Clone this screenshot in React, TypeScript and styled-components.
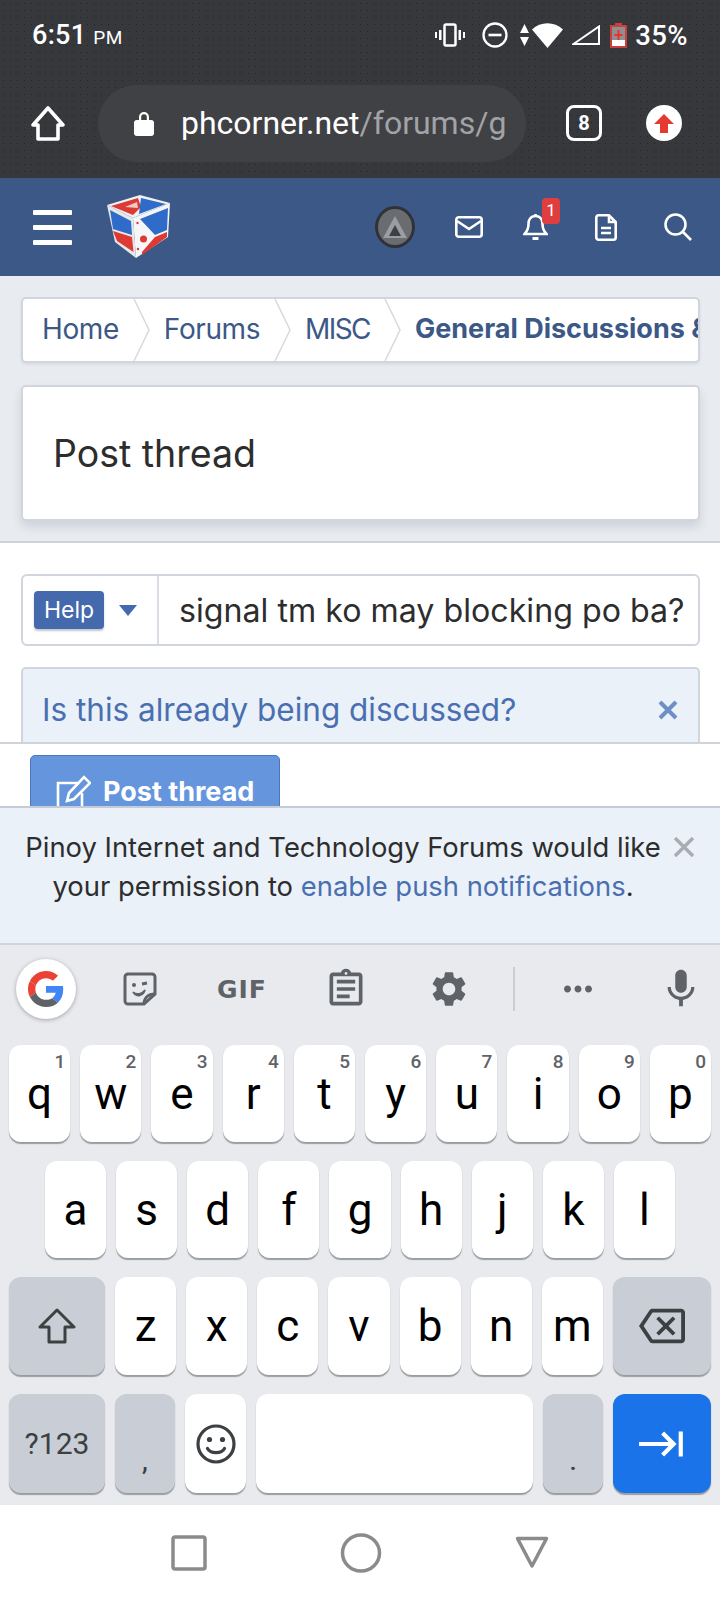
import React from 'react'
import styled, { createGlobalStyle } from 'styled-components'
import {
  MdKeyboardTab,
  MdMic,
  MdMoreHoriz,
  MdOutlineAssignment,
  MdOutlineBackspace,
  MdSettings,
} from 'react-icons/md'

const GlobalStyle = createGlobalStyle`
  html, body { margin: 0; padding: 0; background: #fff; }
  * { box-sizing: border-box; }
  body { font-family: Roboto, "Liberation Sans", sans-serif; }
`

const Screen = styled.div`
  width: 720px;
  height: 1600px;
  display: flex;
  flex-direction: column;
  overflow: hidden;
`

const Chrome = styled.div`
  height: 178px;
  background-color: #37383c;
  background-image: radial-gradient(rgba(0, 0, 0, 0.35) 0.7px, transparent 0.9px);
  background-size: 7px 7px;
  color: #fff;
`
const StatusBar = styled.div`
  height: 68px;
  display: flex;
  align-items: center;
  padding: 2px 32px 0;
`
const Clock = styled.div`
  font-size: 27px;
  font-weight: 500;
  letter-spacing: 0.3px;
  small { font-size: 19px; margin-left: 7px; font-weight: 400; }
`
const StatusIcons = styled.div`
  margin-left: auto;
  display: flex;
  align-items: center;
`
const StatusIcon = styled.svg<{ $gap?: number }>`
  display: block;
  margin-left: ${(p) => p.$gap ?? 0}px;
  fill: #fff;
`
const Battery = styled.div`
  font-size: 27.5px;
  font-weight: 500;
  margin-left: 8px;
  letter-spacing: 0.4px;
`
const UrlRow = styled.div`
  height: 110px;
  display: flex;
  align-items: center;
  padding-left: 30px;
`
const UrlPill = styled.div`
  width: 428px;
  height: 77px;
  margin-left: 32px;
  border-radius: 39px;
  background: #404145;
  display: flex;
  align-items: center;
  padding-left: 36px;
  gap: 27px;
  overflow: hidden;
`
const UrlText = styled.div`
  font-size: 32px;
  white-space: nowrap;
  span { color: #a2a3a6; }
`
const TabCount = styled.div`
  width: 36px;
  height: 36px;
  margin-left: 40px;
  border: 3.5px solid #fff;
  border-radius: 8px;
  display: flex;
  align-items: center;
  justify-content: center;
  font-size: 20px;
  font-weight: 700;
`
const UploadBadge = styled.div`
  width: 36px;
  height: 36px;
  margin-left: 44px;
  border-radius: 50%;
  background: #fff;
  display: flex;
  align-items: center;
  justify-content: center;
`

const SiteHeader = styled.div`
  height: 98px;
  background: #3b5886;
  display: flex;
  align-items: center;
  padding: 0 28px 0 33px;
`
const Burger = styled.div`
  width: 39px;
  display: flex;
  flex-direction: column;
  gap: 10px;
  i { display: block; height: 5px; background: #fff; border-radius: 1px; }
`
const Logo = styled.svg`
  margin-left: 33px;
  display: block;
`
const HeaderTools = styled.div`
  margin-left: auto;
  display: flex;
  align-items: center;
  gap: 40px;
`
const Avatar = styled.div`
  width: 40px;
  height: 42px;
  border-radius: 50%;
  background: #6a6c70;
  border: 3px solid #2f3237;
  display: flex;
  align-items: center;
  justify-content: center;
`
const ToolIcon = styled.svg<{ $after?: number }>`
  display: block;
  fill: none;
  stroke: #fff;
  stroke-width: 2.6;
  margin-right: ${(p) => p.$after ?? 0}px;
`
const BellWrap = styled.div`
  position: relative;
  margin-right: 7px;
`
const Badge = styled.div`
  position: absolute;
  top: -15px;
  right: -12px;
  width: 18px;
  height: 26px;
  border-radius: 4px;
  background: #e03e3e;
  color: #fff;
  font-size: 17px;
  text-align: center;
  line-height: 24px;
`

const TopArea = styled.div`
  height: 267px;
  background: #e8ebef;
  border-bottom: 2px solid #cfd3da;
  padding: 21px 20px 0 21px;
`
const Breadcrumbs = styled.div`
  height: 66px;
  background: #fff;
  border: 2px solid #d0d5de;
  border-radius: 5px;
  display: flex;
  align-items: stretch;
  gap: 14px;
  padding-left: 19px;
  overflow: hidden;
  box-shadow: 0 2px 3px rgba(60, 70, 90, 0.08);
`
const Crumb = styled.a<{ $tight?: boolean }>`
  font-family: Inter, "Noto Sans", sans-serif;
  font-size: 28px;
  line-height: 60px;
  color: #3b5886;
  white-space: nowrap;
  letter-spacing: ${(p) => (p.$tight ? '-1.6px' : '-0.4px')};
`
const CurrentCrumb = styled(Crumb)`
  font-size: 27px;
  font-weight: 700;
  letter-spacing: 0;
`
const CrumbArrow = styled.svg`
  flex: none;
  display: block;
`
const TitleCard = styled.div`
  height: 136px;
  margin-top: 22px;
  background: #fff;
  border: 2px solid #d0d5de;
  border-radius: 5px;
  display: flex;
  align-items: center;
  padding-left: 30px;
  box-shadow: 0 6px 10px rgba(60, 70, 90, 0.14);
`
const PageTitle = styled.h1`
  margin: 0;
  font-family: Inter, "Noto Sans", sans-serif;
  font-size: 37.5px;
  font-weight: 400;
  color: #2d2d2d;
`

const FormArea = styled.div`
  height: 201px;
  background: #fff;
  padding: 31px 20px 0 21px;
  border-bottom: 2px solid #cfd3da;
  overflow: hidden;
`
const TitleInput = styled.div`
  height: 72px;
  border: 2px solid #d0d5de;
  border-radius: 6px;
  display: flex;
  align-items: center;
`
const PrefixCell = styled.div`
  width: 136px;
  height: 100%;
  flex: none;
  border-right: 2px solid #d9dde4;
  display: flex;
  align-items: center;
  padding-left: 11px;
  gap: 15px;
`
const PrefixLabel = styled.span`
  width: 70px;
  height: 38px;
  background: #4469ad;
  border-radius: 4px;
  color: #fff;
  font-family: Inter, "Noto Sans", sans-serif;
  font-size: 23px;
  line-height: 38px;
  text-align: center;
  box-shadow: 0 2px 2px rgba(60, 70, 90, 0.3);
`
const Caret = styled.i`
  width: 0;
  height: 0;
  border-left: 9px solid transparent;
  border-right: 9px solid transparent;
  border-top: 11px solid #4469ad;
`
const InputText = styled.div`
  padding-left: 20px;
  font-family: Inter, "Noto Sans", sans-serif;
  font-size: 32.2px;
  color: #2d2d2d;
  white-space: nowrap;
`
const Notice = styled.div`
  height: 90px;
  margin-top: 21px;
  background: #eaf1f9;
  border: 2px solid #d0d5de;
  border-bottom: 0;
  border-radius: 5px 5px 0 0;
  display: flex;
  align-items: flex-start;
  justify-content: space-between;
  padding: 22px 20px 0 19px;
`
const NoticeText = styled.div`
  font-family: Inter, "Noto Sans", sans-serif;
  font-size: 31.5px;
  line-height: 38px;
  color: #4a6fb0;
`
const NoticeClose = styled.svg`
  margin-top: 9px;
`

const ActionBar = styled.div`
  height: 62px;
  background: #fff;
  padding: 11px 0 0 30px;
  overflow: hidden;
`
const SubmitButton = styled.button`
  width: 250px;
  height: 80px;
  background: #6495dd;
  border: 1px solid #4a78c0;
  border-radius: 5px;
  display: flex;
  align-items: flex-start;
  gap: 12px;
  padding: 22px 0 0 25px;
  color: #fff;
  font-family: Inter, "Noto Sans", sans-serif;
  font-size: 27px;
  line-height: 28px;
  font-weight: 700;
  white-space: nowrap;
  svg { margin-top: -3px; }
`

const PushBar = styled.div`
  height: 139px;
  background: #eaf1f9;
  border-top: 2px solid #c5ccd8;
  border-bottom: 2px solid #cfd5de;
  position: relative;
  padding-top: 20px;
  font-family: Inter, "Noto Sans", sans-serif;
  font-size: 27.4px;
  line-height: 39px;
  color: #2d2d2d;
  text-align: center;
  a { color: #4a6fb0; }
`
const PushLines = styled.div`
  width: 686px;
  white-space: nowrap;
`
const PushClose = styled.svg`
  position: absolute;
  right: 26px;
  top: 29px;
`

const Keyboard = styled.div`
  height: 560px;
  background: #e8eaed;
  display: flex;
  flex-direction: column;
`
const Strip = styled.div`
  height: 100px;
  position: relative;
  display: flex;
  align-items: center;
  color: #5f6368;
`
const GoogleButton = styled.div`
  position: absolute;
  left: 16px;
  top: 14px;
  width: 60px;
  height: 60px;
  border-radius: 50%;
  background: #fff;
  box-shadow: 0 1px 4px rgba(0, 0, 0, 0.3);
  display: flex;
  align-items: center;
  justify-content: center;
`
const StripTools = styled.div`
  width: 100%;
  display: grid;
  grid-template-columns: 92px 112px 96px 110px 20px 108px 98px;
  padding-left: 94px;
  align-items: center;
  justify-items: center;
  margin-top: -12px;
`
const GifLabel = styled.span`
  font-family: "DejaVu Sans", sans-serif;
  font-size: 25px;
  font-weight: 700;
  letter-spacing: 1px;
  color: #5f6368;
`
const StripDivider = styled.i`
  width: 2px;
  height: 44px;
  background: #ccced2;
`
const KeyRows = styled.div`
  display: flex;
  flex-direction: column;
  gap: 19px;
`
const KeyRow = styled.div<{ $inset?: number; $h?: number }>`
  height: ${(p) => p.$h ?? 97}px;
  display: flex;
  gap: 10px;
  padding: 0 ${(p) => p.$inset ?? 9}px;
`
const Key = styled.div<{ $w?: number; $tone?: 'light' | 'mod' | 'action' }>`
  position: relative;
  flex: ${(p) => (p.$w ? `0 0 ${p.$w}px` : '1 1 0')};
  min-width: 0;
  border-radius: 12px;
  display: flex;
  align-items: center;
  justify-content: center;
  font-size: 44px;
  color: #000;
  background: ${(p) =>
    p.$tone === 'mod' ? '#c9ced6' : p.$tone === 'action' ? '#1a73e8' : '#fff'};
  box-shadow: 0 1.5px 1px rgba(60, 64, 67, 0.45);
`
const Hint = styled.span`
  position: absolute;
  top: 5px;
  right: 5px;
  font-size: 19px;
  font-weight: 500;
  color: #5f6368;
`
const SymbolLabel = styled.span`
  font-size: 30px;
  color: #3c4043;
`
const Punct = styled.span`
  font-size: 26px;
  font-weight: 500;
  color: #3c4043;
  align-self: flex-end;
  padding-bottom: 19px;
  line-height: 1;
`

const NavBar = styled.div`
  flex: 1;
  background: #fff;
  display: flex;
  align-items: center;
  justify-content: center;
  gap: 133px;
`

const rowOne = ['q', 'w', 'e', 'r', 't', 'y', 'u', 'i', 'o', 'p']
const hints = ['1', '2', '3', '4', '5', '6', '7', '8', '9', '0']
const rowTwo = ['a', 's', 'd', 'f', 'g', 'h', 'j', 'k', 'l']
const rowThree = ['z', 'x', 'c', 'v', 'b', 'n', 'm']

const CubeLogo = () => (
  <Logo width="68" height="68" viewBox="0 0 68 68">
    <path d="M2 12 35 2 65 10 28 25Z" fill="#eef0f2" />
    <path d="M6 13 33 5 36 14 28 22Z" fill="#dc3a33" />
    <path d="M36 5 61 11 34 21Z" fill="#2f6bc9" />
    <path d="M20 14 32 9 33 15Z" fill="#f1c9c4" />
    <path d="M2 12 28 25 31 65 10 49Z" fill="#e6e8ea" />
    <path d="M5 17 26 28 27 42 8 36Z" fill="#2f6bc9" />
    <path d="M8 38 27 44 28.500 59 12 48Z" fill="#dc3a33" />
    <path d="M28 25 65 10 63 44 31 65Z" fill="#f5f6f7" />
    <path d="M35 26 63 15 62 37 50 42Z" fill="#2f6bc9" />
    <path d="M50 44 62 39 62 44 37 62 37 59Z" fill="#dc3a33" />
    <circle cx="38.500" cy="46" r="3.500" fill="#dc3a33" />
    <circle cx="32.500" cy="30" r="1.200" fill="#dc3a33" />
    <circle cx="33" cy="56" r="1.200" fill="#dc3a33" />
  </Logo>
)

const GoogleMark = () => (
  <svg width="36" height="36" viewBox="0 0 48 48">
    <path fill="#EA4335" d="M24 9.5c3.54 0 6.71 1.22 9.21 3.6l6.85-6.85C35.9 2.38 30.47 0 24 0 14.62 0 6.51 5.38 2.56 13.22l7.98 6.19C12.43 13.72 17.74 9.5 24 9.5z" />
    <path fill="#4285F4" d="M46.98 24.55c0-1.57-.15-3.09-.38-4.55H24v9.02h12.94c-.58 2.96-2.26 5.48-4.78 7.18l7.73 6c4.51-4.18 7.09-10.36 7.09-17.65z" />
    <path fill="#EA4335" d="M10.53 28.59c-.48-1.45-.76-2.99-.76-4.59s.27-3.14.76-4.59l-7.98-6.19C.92 16.46 0 20.12 0 24c0 3.88.92 7.54 2.56 10.78l7.97-6.19z" />
    <path fill="#5f6368" d="M24 48c6.48 0 11.93-2.13 15.89-5.81l-7.73-6c-2.15 1.45-4.92 2.3-8.16 2.3-6.26 0-11.57-4.22-13.47-9.91l-7.98 6.19C6.51 42.62 14.62 48 24 48z" />
  </svg>
)

const CrumbDivider = () => (
  <CrumbArrow width="17" height="62" viewBox="0 0 17 62" fill="none" stroke="#d6d9de" strokeWidth="1.5">
    <path d="M1 0 16 31 1 62" />
  </CrumbArrow>
)

export default function App() {
  return (
    <Screen>
      <GlobalStyle />
      <Chrome>
        <StatusBar>
          <Clock>
            6:51<small>PM</small>
          </Clock>
          <StatusIcons>
            <StatusIcon width="30" height="26" viewBox="0 0 30 26">
              <rect x="9.5" y="2.5" width="11" height="21" rx="1.5" fill="none" stroke="#fff" strokeWidth="2.5" />
              <rect x="4" y="8" width="2.5" height="10" />
              <rect x="23.5" y="8" width="2.5" height="10" />
              <rect x="0" y="10" width="2" height="6" />
              <rect x="28" y="10" width="2" height="6" />
            </StatusIcon>
            <StatusIcon $gap={17} width="26" height="26" viewBox="0 0 26 26">
              <circle cx="13" cy="13" r="11.5" fill="none" stroke="#fff" strokeWidth="2.3" />
              <rect x="6.5" y="11.7" width="13" height="2.6" />
            </StatusIcon>
            <StatusIcon $gap={12} width="9" height="22" viewBox="0 0 9 22">
              <path d="M4.5 0 9 9H0ZM0 13h9l-4.5 9Z" />
            </StatusIcon>
            <StatusIcon $gap={3} width="31" height="25" viewBox="0 0 31 25">
              <path d="M15.5 25 0 6.5C8.5-2 22.5-2 31 6.5Z" />
            </StatusIcon>
            <StatusIcon $gap={9} width="28" height="20" viewBox="0 0 28 20">
              <path d="M1.5 19 27 1.5V19Z" fill="none" stroke="#fff" strokeWidth="2" />
            </StatusIcon>
            <StatusIcon $gap={10} width="17" height="25" viewBox="0 0 17 25">
              <path d="M5 0h7v2h5v23H0V2h5Z" fill="#c9403a" />
              <rect x="2" y="4" width="13" height="13" fill="#8f8f92" />
              <rect x="2" y="17" width="13" height="6" fill="#fff" />
              <path d="M7.5 7h2v4h3v2h-3v4h-2v-4h-3v-2h3Z" fill="#e8332c" />
            </StatusIcon>
            <Battery>35%</Battery>
          </StatusIcons>
        </StatusBar>
        <UrlRow>
          <svg width="36" height="37" viewBox="0 0 36 37" fill="none" stroke="#fff" strokeWidth="3.6" strokeLinejoin="round">
            <path d="M18 3 33 20H28V34H8V20H3Z" />
          </svg>
          <UrlPill>
            <svg width="20" height="25" viewBox="0 0 20 25" fill="#fff">
              <path d="M5 10V6a5 5 0 0 1 10 0v4h-2.2V6a2.8 2.8 0 0 0-5.6 0v4Z" />
              <rect x="0" y="9" width="20" height="16" rx="3" />
            </svg>
            <UrlText>
              phcorner.net<span>/forums/g</span>
            </UrlText>
          </UrlPill>
          <TabCount>8</TabCount>
          <UploadBadge>
            <svg width="20" height="19" viewBox="0 0 20 19" fill="#e53a2f">
              <path d="M10 0 20 10H14V19H6V10H0Z" />
            </svg>
          </UploadBadge>
        </UrlRow>
      </Chrome>

      <SiteHeader>
        <Burger>
          <i />
          <i />
          <i />
        </Burger>
        <CubeLogo />
        <HeaderTools>
          <Avatar>
            <svg width="26" height="26" viewBox="0 0 26 26">
              <path d="M13 2 25 24H1Z" fill="#9a9da1" />
              <path d="M13 11 19 22H7Z" fill="#3d4045" />
            </svg>
          </Avatar>
          <ToolIcon width="28" height="22" viewBox="0 0 28 22">
            <rect x="1.3" y="1.3" width="25.4" height="19.4" rx="2.5" />
            <path d="M2 5 14 13 26 5" />
          </ToolIcon>
          <BellWrap>
            <ToolIcon width="25" height="28" viewBox="0 0 25 28">
              <path d="M12.5 3C7.5 3 5.5 7 5.5 11c0 5-2 8-4 10h22c-2-2-4-5-4-10 0-4-2-8-7-8Z" />
              <path d="M12.5 1v2" />
              <path d="M9.5 25.5h6" strokeWidth="3" />
            </ToolIcon>
            <Badge>1</Badge>
          </BellWrap>
          <ToolIcon $after={7} width="22" height="27" viewBox="0 0 22 27">
            <path d="M14 1.3H3.5a2.2 2.2 0 0 0-2.2 2.2v20a2.2 2.2 0 0 0 2.2 2.2h15a2.2 2.2 0 0 0 2.2-2.2V8Z" />
            <path d="M14 1.3V8h6.7" />
            <path d="M6 14h10M6 19h10" />
          </ToolIcon>
          <ToolIcon width="28" height="28" viewBox="0 0 28 28">
            <circle cx="11.5" cy="11.5" r="10" />
            <path d="M18.5 18.5 27 27" />
          </ToolIcon>
        </HeaderTools>
      </SiteHeader>

      <TopArea>
        <Breadcrumbs>
          <Crumb>Home</Crumb>
          <CrumbDivider />
          <Crumb>Forums</Crumb>
          <CrumbDivider />
          <Crumb $tight>MISC</Crumb>
          <CrumbDivider />
          <CurrentCrumb>General Discussions &amp;</CurrentCrumb>
        </Breadcrumbs>
        <TitleCard>
          <PageTitle>Post thread</PageTitle>
        </TitleCard>
      </TopArea>

      <FormArea>
        <TitleInput>
          <PrefixCell>
            <PrefixLabel>Help</PrefixLabel>
            <Caret />
          </PrefixCell>
          <InputText>signal tm ko may blocking po ba?</InputText>
        </TitleInput>
        <Notice>
          <NoticeText>Is this already being discussed?</NoticeText>
          <NoticeClose width="20" height="20" viewBox="0 0 20 20" stroke="#6d8fc6" strokeWidth="4">
            <path d="M2 2 18 18M18 2 2 18" />
          </NoticeClose>
        </Notice>
      </FormArea>

      <ActionBar>
        <SubmitButton>
          <svg width="35" height="36" viewBox="0 0 35 36" fill="none" stroke="#fff" strokeWidth="2.6">
            <path d="M22 8H2v26h24V18" />
            <path d="M11 26 13 18 28 2 34 8 18 24Z" />
          </svg>
          Post thread
        </SubmitButton>
      </ActionBar>

      <PushBar>
        <PushLines>
          Pinoy Internet and Technology Forums would like
          <br />
          your permission to <a>enable push notifications</a>.
        </PushLines>
        <PushClose width="20" height="20" viewBox="0 0 20 20" stroke="#a9adb3" strokeWidth="3.5">
          <path d="M1 1 19 19M19 1 1 19" />
        </PushClose>
      </PushBar>

      <Keyboard>
        <Strip>
          <GoogleButton>
            <GoogleMark />
          </GoogleButton>
          <StripTools>
            <svg width="34" height="34" viewBox="0 0 34 34" fill="none" stroke="#5f6368" strokeWidth="3">
              <path d="M5 2h24a3 3 0 0 1 3 3v17L21 32H5a3 3 0 0 1-3-3V5a3 3 0 0 1 3-3Z" />
              <path d="M21 32c0-6 4-10 11-10" />
              <circle cx="11" cy="13" r="2" fill="#5f6368" stroke="none" />
              <path d="M19 12l5-1" />
              <path d="M10 20c4 3 9 2 12-2-1 6-9 8-12 2Z" fill="#5f6368" strokeWidth="1.5" />
            </svg>
            <GifLabel>GIF</GifLabel>
            <MdOutlineAssignment size={44} />
            <MdSettings size={42} />
            <StripDivider />
            <MdMoreHoriz size={42} />
            <MdMic size={46} />
          </StripTools>
        </Strip>
        <KeyRows>
          <KeyRow>
            {rowOne.map((k, i) => (
              <Key key={k}>
                <Hint>{hints[i]}</Hint>
                {k}
              </Key>
            ))}
          </KeyRow>
          <KeyRow $inset={45}>
            {rowTwo.map((k) => (
              <Key key={k}>{k}</Key>
            ))}
          </KeyRow>
          <KeyRow $h={98}>
            <Key $w={96} $tone="mod">
              <svg width="38" height="38" viewBox="0 0 38 38" fill="none" stroke="#3c4043" strokeWidth="3" strokeLinejoin="round">
                <path d="M19 3 36 20H27V35H11V20H2Z" />
              </svg>
            </Key>
            {rowThree.map((k) => (
              <Key key={k}>{k}</Key>
            ))}
            <Key $w={98} $tone="mod">
              <MdOutlineBackspace size={46} color="#3c4043" />
            </Key>
          </KeyRow>
          <KeyRow $h={99}>
            <Key $w={96} $tone="mod">
              <SymbolLabel>?123</SymbolLabel>
            </Key>
            <Key $w={60} $tone="mod">
              <Punct>,</Punct>
            </Key>
            <Key $w={61}>
              <svg width="40" height="40" viewBox="0 0 40 40" fill="none" stroke="#3c4043" strokeWidth="3.2">
                <circle cx="20" cy="20" r="18" />
                <circle cx="13.5" cy="15.5" r="2.6" fill="#3c4043" stroke="none" />
                <circle cx="26.5" cy="15.5" r="2.6" fill="#3c4043" stroke="none" />
                <path d="M11.5 24.5c3 5.5 14 5.5 17 0" strokeLinecap="round" />
              </svg>
            </Key>
            <Key />
            <Key $w={60} $tone="mod">
              <Punct>.</Punct>
            </Key>
            <Key $w={98} $tone="action">
              <MdKeyboardTab size={50} color="#fff" />
            </Key>
          </KeyRow>
        </KeyRows>
      </Keyboard>

      <NavBar>
        <svg width="36" height="36" viewBox="0 0 36 36" fill="none" stroke="#8b8b8b" strokeWidth="3.5">
          <rect x="2" y="2" width="32" height="32" rx="2" />
        </svg>
        <svg width="42" height="40" viewBox="0 0 42 40" fill="none" stroke="#8b8b8b" strokeWidth="3.5">
          <ellipse cx="21" cy="20" rx="18.5" ry="18" />
        </svg>
        <svg width="34" height="33" viewBox="0 0 34 33" fill="none" stroke="#8b8b8b" strokeWidth="3.5" strokeLinejoin="round">
          <path d="M2.5 2.5h29L17 30Z" />
        </svg>
      </NavBar>
    </Screen>
  )
}
